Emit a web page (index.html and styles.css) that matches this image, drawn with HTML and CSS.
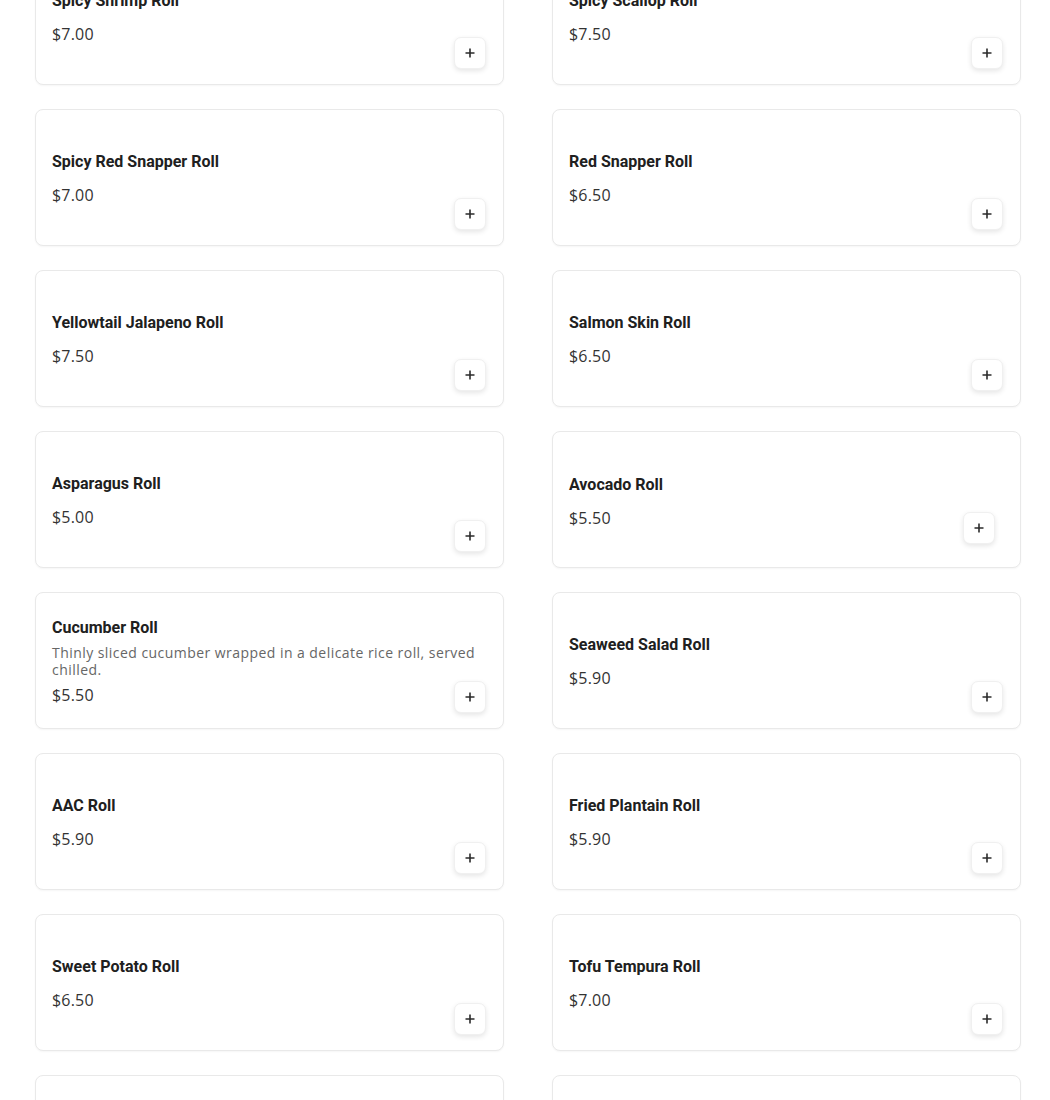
FILE: index.html
```html
<!DOCTYPE html>
<html lang="en">
<head>
<meta charset="utf-8">
<title>Menu</title>
<link rel="stylesheet" href="styles.css">
</head>
<body>
<main class="grid">
  <div class="card"><div class="info"><div class="title">Spicy Shrimp Roll</div><div class="price">$7.00</div></div><button class="add"><svg viewBox="0 0 12 12"><path d="M6 1.5v9M1.5 6h9"/></svg></button></div>
  <div class="card"><div class="info"><div class="title">Spicy Scallop Roll</div><div class="price">$7.50</div></div><button class="add"><svg viewBox="0 0 12 12"><path d="M6 1.5v9M1.5 6h9"/></svg></button></div>
  <div class="card"><div class="info"><div class="title">Spicy Red Snapper Roll</div><div class="price">$7.00</div></div><button class="add"><svg viewBox="0 0 12 12"><path d="M6 1.5v9M1.5 6h9"/></svg></button></div>
  <div class="card"><div class="info"><div class="title">Red Snapper Roll</div><div class="price">$6.50</div></div><button class="add"><svg viewBox="0 0 12 12"><path d="M6 1.5v9M1.5 6h9"/></svg></button></div>
  <div class="card"><div class="info"><div class="title">Yellowtail Jalapeno Roll</div><div class="price">$7.50</div></div><button class="add"><svg viewBox="0 0 12 12"><path d="M6 1.5v9M1.5 6h9"/></svg></button></div>
  <div class="card"><div class="info"><div class="title">Salmon Skin Roll</div><div class="price">$6.50</div></div><button class="add"><svg viewBox="0 0 12 12"><path d="M6 1.5v9M1.5 6h9"/></svg></button></div>
  <div class="card"><div class="info"><div class="title">Asparagus Roll</div><div class="price">$5.00</div></div><button class="add"><svg viewBox="0 0 12 12"><path d="M6 1.5v9M1.5 6h9"/></svg></button></div>
  <div class="card card-alt"><div class="info"><div class="title">Avocado Roll</div><div class="price">$5.50</div></div><button class="add"><svg viewBox="0 0 12 12"><path d="M6 1.5v9M1.5 6h9"/></svg></button></div>
  <div class="card"><div class="info"><div class="title">Cucumber Roll</div><div class="desc">Thinly sliced cucumber wrapped in a delicate rice roll, served chilled.</div><div class="price">$5.50</div></div><button class="add"><svg viewBox="0 0 12 12"><path d="M6 1.5v9M1.5 6h9"/></svg></button></div>
  <div class="card"><div class="info"><div class="title">Seaweed Salad Roll</div><div class="price">$5.90</div></div><button class="add"><svg viewBox="0 0 12 12"><path d="M6 1.5v9M1.5 6h9"/></svg></button></div>
  <div class="card"><div class="info"><div class="title">AAC Roll</div><div class="price">$5.90</div></div><button class="add"><svg viewBox="0 0 12 12"><path d="M6 1.5v9M1.5 6h9"/></svg></button></div>
  <div class="card"><div class="info"><div class="title">Fried Plantain Roll</div><div class="price">$5.90</div></div><button class="add"><svg viewBox="0 0 12 12"><path d="M6 1.5v9M1.5 6h9"/></svg></button></div>
  <div class="card"><div class="info"><div class="title">Sweet Potato Roll</div><div class="price">$6.50</div></div><button class="add"><svg viewBox="0 0 12 12"><path d="M6 1.5v9M1.5 6h9"/></svg></button></div>
  <div class="card"><div class="info"><div class="title">Tofu Tempura Roll</div><div class="price">$7.00</div></div><button class="add"><svg viewBox="0 0 12 12"><path d="M6 1.5v9M1.5 6h9"/></svg></button></div>
  <div class="card"><div class="info"></div></div>
  <div class="card"><div class="info"></div></div>
</main>
</body>
</html>
```
FILE: styles.css
```css
html, body {
  margin: 0;
  padding: 0;
  background: #ffffff;
  overflow: hidden;
}
.grid {
  display: grid;
  grid-template-columns: 469px 469px;
  column-gap: 48px;
  row-gap: 24px;
  padding-left: 35px;
  margin-top: -52px;
}
.card {
  box-sizing: border-box;
  height: 137px;
  display: grid;
  grid-template-columns: 1fr;
  grid-template-rows: 1fr;
  padding: 16px;
  border: 1px solid #e9e9e9;
  border-radius: 8px;
  background: #fff;
  box-shadow: 0 1px 2px rgba(0,0,0,0.04);
}
.info {
  grid-area: 1 / 1;
  display: flex;
  flex-direction: column;
  justify-content: center;
  padding-top: 4px;
}
.title {
  font-family: Roboto, "Liberation Sans", sans-serif;
  font-weight: 700;
  font-size: 16px;
  line-height: 20px;
  color: #202020;
  margin-bottom: 6px;
}
.desc {
  font-family: "Open Sans", "Liberation Sans", sans-serif;
  font-size: 14px;
  line-height: 17px;
  letter-spacing: 0.45px;
  color: #666;
}
.price {
  font-family: "Open Sans", "Liberation Sans", sans-serif;
  font-size: 16px;
  line-height: 24px;
  letter-spacing: 0.2px;
  color: #333;
  margin-top: 5px;
}
.add {
  grid-area: 1 / 1;
  justify-self: end;
  align-self: end;
  width: 32px;
  height: 32px;
  margin: 0 1px -1px 0;
  padding: 0;
  display: flex;
  align-items: center;
  justify-content: center;
  background: #fff;
  border: 1px solid #f0f0f0;
  border-radius: 7px;
  box-shadow: 0 2px 5px rgba(0,0,0,0.1);
  cursor: pointer;
}
.add svg {
  width: 12px;
  height: 12px;
  fill: none;
  stroke: #2b2b2b;
  stroke-width: 1.6;
}
.card-alt .info { padding-top: 6px; }
.card-alt .add { margin: 0 9px 7px 0; }
```
